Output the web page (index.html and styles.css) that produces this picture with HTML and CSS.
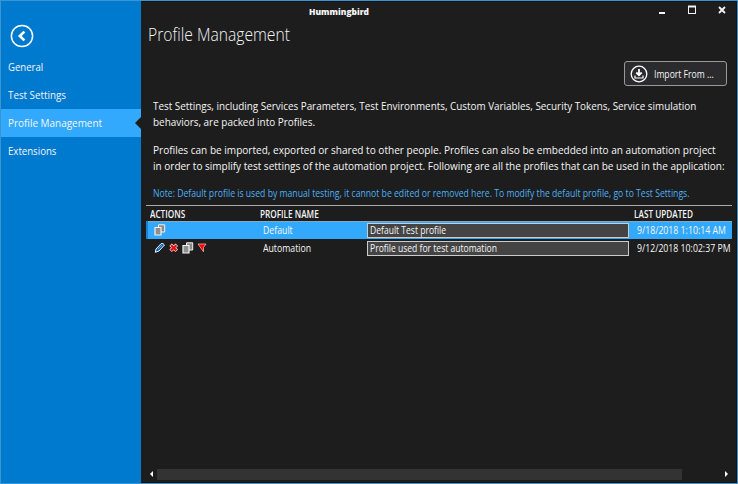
FILE: index.html
```
<!DOCTYPE html>
<html lang="en">
<head>
<meta charset="utf-8">
<title>Hummingbird</title>
<link rel="stylesheet" href="styles.css">
</head>
<body>
<svg class="symbols" width="0" height="0">
  <symbol id="copy" viewBox="0 0 12 12"><path d="M4.5.8h6.200v7.200H4.500z" fill="#8a8a8a" stroke="#f2f2f2"/><path d="M1 3.500h6v7.500H1z" fill="#8f8f8f" stroke="#f2f2f2" stroke-width="1.200"/></symbol>
</svg>
<div class="window">
  <nav class="sidebar">
    <button class="back" aria-label="Back"><svg width="24" height="24" viewBox="0 0 24 24" fill="none" stroke="#fff"><circle cx="12" cy="12" r="10.6" stroke-width="1.5"/><path d="M14.400 7.600 9.800 12l4.600 4.400" stroke-width="2.600"/></svg></button>
    <a class="nav-item"><span class="fit t-general">General</span></a>
    <a class="nav-item"><span class="fit t-settings">Test Settings</span></a>
    <a class="nav-item selected"><span class="fit t-profile">Profile Management</span></a>
    <a class="nav-item"><span class="fit t-ext">Extensions</span></a>
  </nav>
  <main class="content">
    <header class="titlebar">
      <span class="fit app-title">Hummingbird</span>
      <svg class="controls" width="70" height="12" viewBox="0 0 70 12" fill="none" stroke="#f4f4f4"><path d="M0 9h6" stroke-width="2"/><path d="M29 9.500h8M29.500 2v8M36.500 2v8"/><path d="M29 2.500h8" stroke-width="2"/><path d="m60 3 6 6m0-6-6 6" stroke-width="1.800"/></svg>
    </header>
    <h1><span class="fit heading">Profile Management</span></h1>
    <div class="toolbar"><button class="import"><svg width="18" height="18" viewBox="0 0 18 18" fill="none" stroke="#fff"><circle cx="9" cy="9" r="7.800" stroke-width="1.300"/><path d="M9 4v6M6.300 7.500 9 10.200l2.700-2.700" stroke-width="1.800"/><path d="M5 10.500v2.500h8v-2.500" stroke-width="1.200"/></svg><span class="fit import-text">Import From ...</span></button></div>
    <section class="intro">
      <p><span class="fit l1">Test Settings, including Services Parameters, Test Environments, Custom Variables, Security Tokens, Service simulation</span><br><span class="fit l2">behaviors, are packed into Profiles.</span></p>
      <p><span class="fit l3">Profiles can be imported, exported or shared to other people. Profiles can also be embedded into an automation project</span><br><span class="fit l4">in order to simplify test settings of the automation project. Following are all the profiles that can be used in the application:</span></p>
      <p class="note"><span class="fit l5">Note: Default profile is used by manual testing, it cannot be edited or removed here. To modify the default profile, go to Test Settings.</span></p>
    </section>
    <section class="grid">
      <div class="row head"><span class="c1"><b class="fit cap">ACTIONS</b></span><span class="c2"><b class="fit cap">PROFILE NAME</b></span><span></span><span class="c4"><b class="fit cap">LAST UPDATED</b></span></div>
      <div class="row active"><span class="icons"><svg width="12" height="12"><use href="#copy"/></svg></span><span class="name"><span class="fit cell">Default</span></span><span class="field"><span class="fit desc">Default Test profile</span></span><span class="date"><span class="fit cell">9/18/2018 1:10:14 AM</span></span></div>
      <div class="row"><span class="icons"><svg width="12" height="12" viewBox="0 0 12 12"><path d="m1.300 10.300.7-3.300 5-5.300q2-1 3.500 1.300L5 9z" fill="#0f5fae" stroke="#e9f3ff"/><path d="m4 7 4-4" stroke="#5fa5e6"/></svg><svg width="12" height="12" viewBox="0 0 12 12"><path d="m2.600 2.800 6.200 6m0-6-6.200 6" stroke="#ffd6d6" stroke-width="3.600"/><path d="m3 3.200 5.400 5.200m0-5.200L3 8.400" stroke="#e01010" stroke-width="2.200"/></svg><svg width="12" height="12"><use href="#copy"/></svg><svg width="12" height="12" viewBox="0 0 12 12"><path d="M2 2h8L7.500 5.500v4.300L2 2z" fill="#f00" stroke="#ffaaaa" stroke-width=".8"/></svg></span><span class="name"><span class="fit cell">Automation</span></span><span class="field"><span class="fit desc">Profile used for test automation</span></span><span class="date"><span class="fit cell">9/12/2018 10:02:37 PM</span></span></div>
    </section>
    <footer class="scrollbar"><i class="arrow left"></i><i class="thumb"></i><i class="arrow right"></i></footer>
  </main>
</div>
</body>
</html>
```
FILE: styles.css
```
* { box-sizing: border-box; }
body { margin: 0; font: 11px/16px "Open Sans", "Noto Sans", sans-serif; color: #f5f5f5; background: #1d1d1d; white-space: nowrap; overflow: hidden; }
button { padding: 0; color: inherit; font: inherit; }

/* Condensed text: each run keeps its height and is narrowed from its left edge. */
.fit { display: inline-block; transform-origin: 0 50%; }
.t-general { transform: scaleX(.87); }
.t-settings { transform: scaleX(.89); }
.t-profile { transform: scaleX(.904); }
.t-ext { transform: scaleX(.875); }
.heading { transform: scaleX(.895); }
.import-text { transform: scaleX(.86); }
.l1 { transform: scaleX(.897); }
.l2 { transform: scaleX(.902); }
.l3 { transform: scaleX(.914); }
.l4 { transform: scaleX(.91); }
.l5 { transform: scaleX(.865); }
.cap { transform: scaleX(.82); }
.cell { transform: scaleX(.873); }
.desc { transform: scaleX(.855); }

.symbols { position: absolute; }
.window { height: 484px; display: flex; border: 1px solid #3994d2; overflow: hidden; }
.sidebar { width: 140px; background: #007acf; padding-top: 23px; flex: none; }
.back { display: block; width: 24px; height: 24px; margin: 0 0 5px 9px; border: 0; background: none; }
.nav-item { display: flex; align-items: center; height: 28px; padding-left: 7px; }
.selected { background: #33a9fd; justify-content: space-between; }
.selected::after { content: ""; border: 6px solid transparent; border-right-color: #1d1d1d; border-left: 0; }
.content { flex: 1; min-width: 0; display: flex; flex-direction: column; background: #1d1d1d; border: 1px solid #101010; border-left: 0; overflow: hidden; }
.titlebar { height: 19px; display: flex; justify-content: space-between; padding: 1px 7px 0 168px; }
.app-title { font-weight: 800; font-size: 9.500px; line-height: 18px; transform: scaleX(.888); }
.controls { margin-top: 1px; }
h1 { margin: 0; padding-left: 7px; font-size: 17.500px; font-weight: 300; line-height: 26px; height: 40px; }
.toolbar { display: flex; justify-content: flex-end; padding-right: 9px; }
.import { width: 103px; height: 25px; display: flex; align-items: center; gap: 6px; padding-left: 5px; border: 1px solid #999; border-radius: 3px; background: #2b2b2d; font-size: 10px; }
.intro { padding: 12px 0 0 12px; height: 119px; line-height: 15.500px; overflow: hidden; }
.intro p { margin: 0 0 13px; }
.intro .fit { vertical-align: top; }
.intro .note { color: #4bb0f4; font-size: 10px; }

.grid { width: 586px; margin-left: 5px; border-top: 1px solid #aaa; }
.row { display: grid; grid-template-columns: 112px 109px 262px 1fr; height: 18px; align-items: center; font-size: 10px; line-height: 16px; }
.row.head { height: 15px; font-size: 10px; line-height: 14px; }
.cap { font-weight: 600; }
.c1 { padding-left: 4px; }
.c2 { padding-left: 2px; }
.c4 { padding-left: 5px; }
.active { background: #33a9fd; box-shadow: inset 2px 0 #1583d6, inset 0 1px #83a9c5; }
.icons { display: flex; gap: 2px; padding-left: 8px; }
.name { padding-left: 5px; }
.row > .field { height: 15px; line-height: 13px; border: 1.500px solid #ccc; background: #444; padding-left: 2px; }
.date { padding-left: 8px; }

.scrollbar { margin-top: auto; height: 16px; display: flex; align-items: center; }
.thumb { width: 525px; height: 11px; background: #333; }
.arrow { border: 3px solid transparent; }
.left { border-left: 0; border-right-color: #fff; margin: 0 4px 0 9px; }
.right { border-right: 0; border-left-color: #fff; margin-left: 43px; }
```
